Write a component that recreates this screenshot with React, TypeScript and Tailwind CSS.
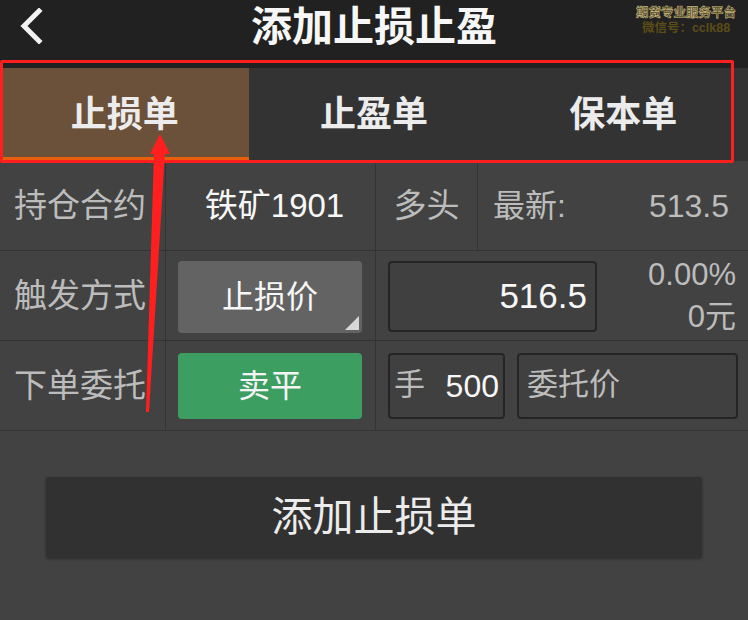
import { useState } from "react"

const tabs = ["止损单", "止盈单", "保本单"]

function BackIcon() {
    return (
        <svg width="26" height="36" viewBox="0 0 26 36" fill="none">
            <polyline points="21,3 6,18 21,33" stroke="#f2f2f2" strokeWidth="5" strokeLinecap="square" />
        </svg>
    )
}

function Annotations() {
    return (
        <>
            <div className="pointer-events-none absolute left-0 top-[60px] h-[103px] w-[734px] rounded-[2px] border-[3px] border-[#ff1f1f]" />
            <svg className="pointer-events-none absolute left-0 top-0" width="748" height="620">
                <polygon points="160,134 150,154 170,154" fill="#ff1f1f" />
                <polygon points="154,152 165,152 149,412 146,412" fill="#ff1f1f" />
            </svg>
        </>
    )
}

function App() {
    const [active, setActive] = useState(0)

    return (
        <div className="relative h-[620px] w-[748px] overflow-hidden bg-[#424242] font-['Liberation_Sans','Noto_Sans_CJK_SC',sans-serif]">
            <div className="relative flex h-[68px] items-start justify-center bg-[#212121]">
                <div className="absolute left-[18px] top-[8px]">
                    <BackIcon />
                </div>
                <h1 className="mt-[1px] text-[41px] font-bold leading-[52px] text-[#f7f7f7]">添加止损止盈</h1>
                <div className="absolute right-[12px] top-[6px] flex flex-col items-center leading-[15px]">
                    <span className="text-[12.5px] font-bold text-[#4a4020] [-webkit-text-stroke:0.6px_#c9bb80]">期货专业服务平台</span>
                    <span className="text-[12.5px] font-bold text-[#5c4c18]">微信号：cclk88</span>
                </div>
            </div>

            <div className="flex h-[93px] bg-[#333333]">
                {tabs.map((tab, i) => (
                    <button
                        key={tab}
                        onClick={() => setActive(i)}
                        className={
                            i === active
                                ? "flex flex-1 items-center justify-center border-b-4 border-[#e85e0c] bg-[#6b513a] pt-[4px] text-[36px] font-bold text-[#ececec]"
                                : "flex flex-1 items-center justify-center border-b-4 border-transparent pt-[4px] text-[36px] font-bold text-[#ececec]"
                        }
                    >
                        {tab}
                    </button>
                ))}
            </div>

            <div className="flex h-[90px] border-b border-[#343434]">
                <div className="flex w-[166px] items-center border-r border-[#343434] pl-[14px] text-[33px] text-[#bcbcbc]">持仓合约</div>
                <div className="flex w-[210px] items-center justify-center border-r border-[#343434] pl-[8px] text-[33px] text-[#f7f7f7]">铁矿1901</div>
                <div className="flex w-[102px] items-center justify-center border-r border-[#343434] text-[33px] text-[#bcbcbc]">多头</div>
                <div className="flex flex-1 items-center justify-between pl-[15px] pr-[19px] text-[32px] text-[#bcbcbc]">
                    <span>最新:</span>
                    <span>513.5</span>
                </div>
            </div>

            <div className="flex h-[90px] border-b border-[#343434]">
                <div className="flex w-[166px] items-center border-r border-[#343434] pl-[14px] text-[33px] text-[#bcbcbc]">触发方式</div>
                <div className="flex w-[210px] items-center border-r border-[#343434] pl-[12px] pr-[13px]">
                    <div className="relative mt-[2px] flex h-[72px] flex-1 items-center justify-center rounded-[4px] bg-[#646364] text-[32px] text-[#f7f7f7]">
                        止损价
                        <svg className="absolute bottom-[3px] right-[3px]" width="14" height="14" viewBox="0 0 14 14">
                            <polygon points="14,0 14,14 0,14" fill="#d8d8d8" />
                        </svg>
                    </div>
                </div>
                <div className="flex flex-1 items-center pl-[12px] pr-[12px]">
                    <div className="mt-[2px] flex h-[71px] w-[209px] items-center justify-end rounded-[4px] border-2 border-[#252525] bg-[#404040] pr-[8px] text-[35px] text-[#f7f7f7]">516.5</div>
                    <div className="flex flex-1 flex-col items-end text-[31px] leading-[42px] text-[#bcbcbc]">
                        <span>0.00%</span>
                        <span>0元</span>
                    </div>
                </div>
            </div>

            <div className="flex h-[90px] border-b border-[#343434]">
                <div className="flex w-[166px] items-center border-r border-[#343434] pl-[14px] text-[33px] text-[#bcbcbc]">下单委托</div>
                <div className="flex w-[210px] items-center border-r border-[#343434] pl-[12px] pr-[13px]">
                    <button className="flex h-[66px] flex-1 items-center justify-center rounded-[4px] bg-[#3d9e62] text-[32px] text-[#f4f4f4]">卖平</button>
                </div>
                <div className="flex flex-1 items-center gap-[12px] pl-[12px] pr-[10px]">
                    <div className="flex h-[66px] w-[117px] items-center justify-between rounded-[4px] border-2 border-[#252525] bg-[#404040] pl-[4px] pr-[4px]">
                        <span className="text-[31px] text-[#bcbcbc]">手</span>
                        <span className="text-[32px] text-[#f7f7f7]">500</span>
                    </div>
                    <div className="flex h-[66px] flex-1 items-center rounded-[4px] border-2 border-[#252525] bg-[#404040] pl-[8px] text-[31px] text-[#bcbcbc]">委托价</div>
                </div>
            </div>

            <div className="px-[46px] pt-[46px]">
                <button className="flex h-[81px] w-full items-center justify-center rounded-[3px] bg-[#313131] text-[41px] text-[#ececec] shadow-[0_1px_3px_rgba(0,0,0,0.35)]">
                    添加止损单
                </button>
            </div>

            <Annotations />
        </div>
    )
}

export default App
